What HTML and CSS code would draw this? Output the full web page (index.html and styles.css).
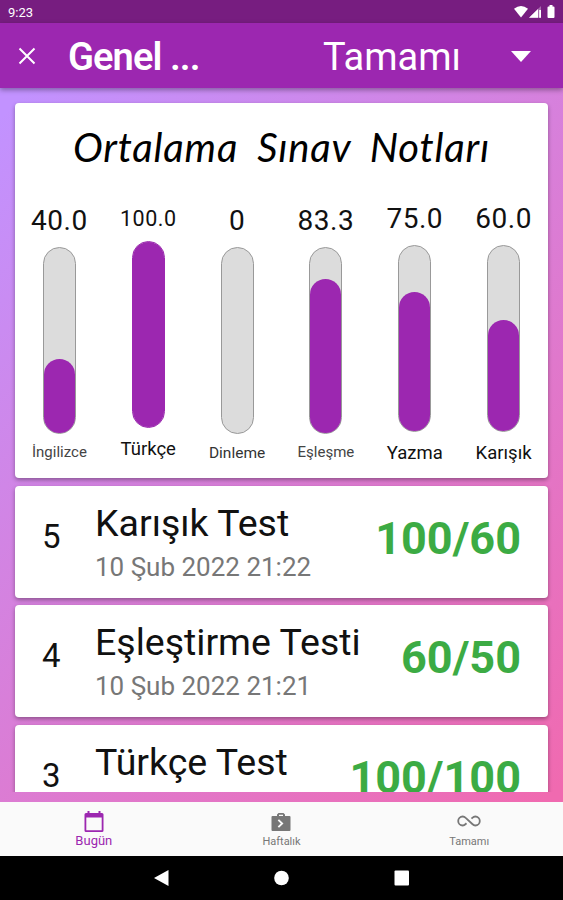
FILE: index.html
```html
<!DOCTYPE html>
<html lang="tr">
<head>
    <meta charset="UTF-8">
    <meta name="viewport" content="width=device-width, initial-scale=1.0">
    <title>Genel Notlar</title>
    <link rel="stylesheet" href="styles.css">
</head>
<body>
    <div class="status-bar">
        <span class="clock">9:23</span>
        <svg class="status-icons" width="44" height="16" viewBox="0 0 44 16" fill="#fff">
            <path d="M1 4.8Q8 -0.8 15 4.8L8 13.4Z"/>
            <path d="M16 13.8L28 2V13.8Z" fill-opacity=".35"/>
            <path d="M16 13.8L25 5V13.800ZM26.200 6h1.800v7.800H26.200Z"/>
            <path d="M34.500 3.400q0-1 1-1h1V1h3v1.400h1q1 0 1 1V13q0 1-1 1h-5q-1 0-1-1Z"/>
        </svg>
    </div>

    <header class="app-bar">
        <svg class="close" width="18" height="18" viewBox="0 0 18 18" stroke="#fff" stroke-width="2">
            <path d="M1.500 1.500L16.500 16.500M16.500 1.500L1.500 16.500"/>
        </svg>
        <h1>Genel ...</h1>
        <span class="filter">Tamamı</span>
        <span class="arrow"></span>
    </header>

    <main>
        <section class="card chart">
            <h2>Ortalama Sınav Notları</h2>
            <div class="bars">
                <div class="col">
                    <span class="value">40.0</span>
                    <div class="bar"><div class="fill" style="height: 40%"></div></div>
                    <span class="name ingilizce">İngilizce</span>
                </div>
                <div class="col full">
                    <span class="value small">100.0</span>
                    <div class="bar"><div class="fill" style="height: 100%"></div></div>
                    <span class="name turkce">Türkçe</span>
                </div>
                <div class="col">
                    <span class="value">0</span>
                    <div class="bar"></div>
                    <span class="name dinleme">Dinleme</span>
                </div>
                <div class="col">
                    <span class="value">83.3</span>
                    <div class="bar"><div class="fill" style="height: 83.3%"></div></div>
                    <span class="name eslesme">Eşleşme</span>
                </div>
                <div class="col high">
                    <span class="value">75.0</span>
                    <div class="bar"><div class="fill" style="height: 75%"></div></div>
                    <span class="name">Yazma</span>
                </div>
                <div class="col high">
                    <span class="value">60.0</span>
                    <div class="bar"><div class="fill" style="height: 60%"></div></div>
                    <span class="name">Karışık</span>
                </div>
            </div>
        </section>

        <section class="card test">
            <span class="number">5</span>
            <div class="info">
                <h3>Karışık Test</h3>
                <p>10 Şub 2022 21:22</p>
            </div>
            <span class="score">100/60</span>
        </section>

        <section class="card test">
            <span class="number">4</span>
            <div class="info">
                <h3>Eşleştirme Testi</h3>
                <p>10 Şub 2022 21:21</p>
            </div>
            <span class="score">60/50</span>
        </section>

        <section class="card test">
            <span class="number">3</span>
            <div class="info">
                <h3>Türkçe Test</h3>
            </div>
            <span class="score">100/100</span>
        </section>
    </main>

    <nav class="tabs">
        <a class="tab active">
            <svg width="20" height="22" viewBox="0 0 20 22" fill="currentColor">
                <path fill-rule="evenodd" d="M3.500 0h2v2h9V0h2v2H18q1.500 0 1.500 1.500V19.500q0 1.500-1.500 1.500H2Q.5 21 .5 19.500V3.500Q.5 2 2 2h1.500ZM2.300 6.500V19.200H17.700V6.500Z"/>
            </svg>
            <span>Bugün</span>
        </a>
        <a class="tab">
            <svg class="case" width="20" height="20" viewBox="0 0 20 20" fill="currentColor">
                <path fill-rule="evenodd" d="M6 4V2.500L7.500 1h5L14 2.500V4h4.500q1 0 1 1V18q0 1-1 1h-17q-1 0-1-1V5q0-1 1-1ZM8 4h4V2.800H8ZM8 7.300L12.500 11.500L8 15.700L6.700 14.500L9.800 11.500L6.700 8.500Z"/>
            </svg>
            <span>Haftalık</span>
        </a>
        <a class="tab">
            <svg class="infinity" width="24" height="14" viewBox="0 0 24 14" fill="none" stroke="currentColor" stroke-width="1.8">
                <path d="M9.500 9.300L8.700 10C7.800 10.900 7 11.500 5.700 11.500a4.500 4.500 0 0 1 0-9C7 2.500 7.800 3 8.700 3.900L15.300 10C16.200 10.900 17 11.500 18.300 11.500a4.500 4.500 0 0 0 0-9C17 2.500 16.200 3 15.300 3.900L14.500 4.700"/>
            </svg>
            <span>Tamamı</span>
        </a>
    </nav>

    <footer class="system-nav">
        <svg width="16" height="18" viewBox="0 0 16 18" fill="#fff"><path d="M0 9L14.500 1V17Z"/></svg>
        <svg width="16" height="16" viewBox="0 0 16 16" fill="#fff"><circle cx="7.500" cy="8" r="7.300"/></svg>
        <svg width="16" height="16" viewBox="0 0 16 16" fill="#fff"><rect x=".5" y=".5" width="14.500" height="15" rx="1"/></svg>
    </footer>
</body>
</html>
```
FILE: styles.css
```css
* {
    box-sizing: border-box;
}
body {
    margin: 0;
    height: 900px;
    display: flex;
    flex-direction: column;
    overflow: hidden;
    font-family: Roboto, sans-serif;
    color: #111;
    background: linear-gradient(135deg, #c292ff 8%, #f06ab0 92%);
}
h1, h2, h3, p {
    margin: 0;
    font-weight: 400;
    white-space: nowrap;
}
.status-bar {
    height: 23px;
    padding: 0 6px 0 8px;
    display: flex;
    justify-content: space-between;
    align-items: center;
    background: #771d80;
    color: #fff;
}
.clock {
    padding-top: 2px;
    font-size: 13px;
    font-weight: 400;
}
.app-bar {
    height: 65px;
    padding: 0 32px 0 18px;
    display: flex;
    align-items: center;
    background: #9c27b0;
    color: #fff;
    box-shadow: 0 2px 5px rgba(0,0,0,0.35);
    z-index: 1;
}
.app-bar h1 {
    width: 255px;
    margin-left: 32px;
    padding-top: 2px;
    font-size: 38px;
    font-weight: 600;
    letter-spacing: -0.9px;
}
.filter {
    padding-top: 2px;
    font-size: 38px;
}
.arrow {
    margin-left: auto;
    margin-top: 2px;
    border: 10px solid transparent;
    border-top: 11px solid #fff;
    border-bottom: 0;
}
main {
    height: 704px;
    padding: 15px 15px 0;
    display: flex;
    flex-direction: column;
    gap: 7.5px;
    overflow: hidden;
}
.card {
    flex: none;
    background: #fff;
    border-radius: 4px;
    box-shadow: 0 2px 4px rgba(0,0,0,0.35);
}
.chart {
    height: 375px;
}
.chart h2 {
    height: 96px;
    padding-top: 20px;
    text-align: center;
    font-family: Lato, sans-serif;
    font-style: italic;
    font-size: 40px;
    letter-spacing: 0.8px;
    word-spacing: 9px;
    color: #000;
}
.bars {
    display: grid;
    grid-template-columns: repeat(6, 1fr);
}
.col {
    display: flex;
    flex-direction: column;
    align-items: center;
}
.value {
    height: 48px;
    padding-top: 6px;
    font-size: 28px;
    line-height: 32px;
    letter-spacing: 0.5px;
}
.value.small {
    font-size: 21.5px;
    line-height: 28px;
}
.high .value {
    height: 46px;
    padding-top: 4px;
}
.full .value {
    height: 42px;
}
.bar {
    width: 33px;
    height: 187px;
    display: flex;
    align-items: flex-end;
    border: 1px solid #999;
    border-radius: 17px;
    background: #dcdcdc;
}
.fill {
    width: 100%;
    border-radius: 16px;
    background: #9c27b0;
}
.full .bar {
    border-color: #9c27b0;
}
.name {
    height: 24px;
    margin-top: 6px;
    line-height: 24px;
    white-space: nowrap;
}
.ingilizce {
    font-size: 15px;
    color: #444;
}
.turkce {
    margin-top: 9px;
    font-size: 18.5px;
}
.dinleme {
    margin-top: 7px;
    font-size: 15.5px;
    color: #333;
}
.eslesme {
    font-size: 15px;
    color: #444;
}
.high .name {
    margin-top: 9px;
    font-size: 18.5px;
}
.test {
    height: 112px;
    padding: 0 27px;
    display: flex;
}
.number {
    width: 53px;
    padding-top: 31px;
    font-size: 33px;
    line-height: 40px;
}
.info h3 {
    padding-top: 15px;
    font-size: 37.5px;
    line-height: 44px;
}
.info p {
    font-size: 26px;
    line-height: 45px;
    color: #777;
}
.score {
    margin-left: auto;
    padding-top: 27px;
    font-size: 45px;
    line-height: 52px;
    font-weight: 700;
    color: #3cab44;
}
.tabs {
    height: 54px;
    margin-top: 10px;
    display: grid;
    grid-template-columns: repeat(3, 1fr);
    background: #fafafa;
}
.tab {
    display: flex;
    flex-direction: column;
    align-items: center;
    justify-content: flex-end;
    padding-bottom: 7px;
    font-size: 11px;
    line-height: 14px;
    color: #777;
}
.tab.active {
    font-size: 13px;
    line-height: 16px;
    color: #9c27b0;
}
.case {
    margin-bottom: 3px;
}
.infinity {
    margin-bottom: 7px;
}
.system-nav {
    height: 44px;
    display: flex;
    justify-content: center;
    align-items: center;
    gap: 104px;
    background: #000;
}
```
